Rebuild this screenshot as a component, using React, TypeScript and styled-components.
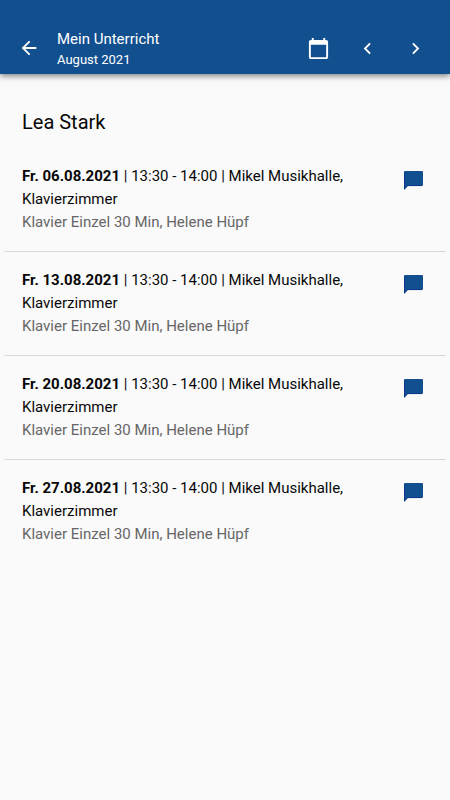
import React from "react";
import styled, { createGlobalStyle } from "styled-components";
import {
  MdArrowBack,
  MdCalendarToday,
  MdChevronLeft,
  MdChevronRight,
} from "react-icons/md";

const GlobalStyle = createGlobalStyle`
  *, *::before, *::after { box-sizing: border-box; }
  body {
    margin: 0;
    background: #fafafa;
    color: #080808;
    font-family: Roboto, "Liberation Sans", sans-serif;
  }
`;

const AppBar = styled.header`
  display: flex;
  align-items: center;
  padding: 22px 11px 0 6px;
  min-height: 74px;
  background: #124f8f;
  color: #fff;
  box-shadow: 0 2px 6px rgba(0, 0, 0, 0.5);
`;

const Titles = styled.div`
  flex: 1;
  min-width: 0;
  padding: 2px 0 0 5px;
`;

const Title = styled.h1`
  margin: 0;
  font-size: 15px;
  font-weight: 400;
  line-height: 22px;
`;

const Subtitle = styled.p`
  margin: 0;
  font-size: 13px;
  line-height: 20px;
`;

const IconButton = styled.button<{ $width: number }>`
  display: flex;
  align-items: center;
  justify-content: center;
  flex: none;
  width: ${(p) => p.$width}px;
  height: 46px;
  padding: 0;
  border: 0;
  background: none;
  color: inherit;
  cursor: pointer;
`;

const Student = styled.h2`
  margin: 0;
  padding: 36px 22px 0;
  font-size: 20px;
  font-weight: 400;
  line-height: 24px;
`;

const Lessons = styled.ul`
  margin: 0;
  padding: 14px 4px 0;
  list-style: none;
`;

const Lesson = styled.li`
  display: flex;
  align-items: flex-start;
  padding: 17px 10px 17px 18px;
  border-bottom: 1px solid #d9d9d9;

  &:last-child {
    border-bottom: 0;
  }
`;

const Details = styled.div`
  flex: 1;
  min-width: 0;
  padding-right: 24px;
  font-size: 15px;
  line-height: 23px;
`;

const Line = styled.p<{ $muted?: boolean }>`
  margin: 0;
  color: ${(p) => (p.$muted ? "#666" : "inherit")};
`;

const CommentButton = styled(IconButton)`
  height: 30px;
  color: #124f8f;
`;

function CommentIcon() {
  return (
    <svg width="19" height="19" viewBox="0 0 19 19" aria-hidden="true">
      <path
        fill="currentColor"
        d="M1 0H18Q19 0 19 1V14Q19 15 18 15H3.8L0.6 18.4Q0 19 0 18V1Q0 0 1 0Z"
      />
      <path
        fill="none"
        stroke="#0b2f8c"
        strokeWidth="0.8"
        d="M0.4 1V18L3.6 14.6H18"
      />
    </svg>
  );
}

const dates = ["06.08.2021", "13.08.2021", "20.08.2021", "27.08.2021"];

export default function App() {
  return (
    <>
      <GlobalStyle />
      <AppBar>
        <IconButton $width={46} aria-label="Zurück">
          <MdArrowBack size={22} />
        </IconButton>
        <Titles>
          <Title>Mein Unterricht</Title>
          <Subtitle>August 2021</Subtitle>
        </Titles>
        <IconButton $width={49} aria-label="Kalender">
          <MdCalendarToday size={23} />
        </IconButton>
        <IconButton $width={48} aria-label="Vorheriger Monat">
          <MdChevronLeft size={23} />
        </IconButton>
        <IconButton $width={48} aria-label="Nächster Monat">
          <MdChevronRight size={23} />
        </IconButton>
      </AppBar>
      <main>
        <Student>Lea Stark</Student>
        <Lessons>
          {dates.map((date) => (
            <Lesson key={date}>
              <Details>
                <Line>
                  <b>Fr. {date}</b> | 13:30 - 14:00 | Mikel Musikhalle, Klavierzimmer
                </Line>
                <Line $muted>Klavier Einzel 30 Min, Helene Hüpf</Line>
              </Details>
              <CommentButton $width={45} aria-label="Kommentar">
                <CommentIcon />
              </CommentButton>
            </Lesson>
          ))}
        </Lessons>
      </main>
    </>
  );
}
